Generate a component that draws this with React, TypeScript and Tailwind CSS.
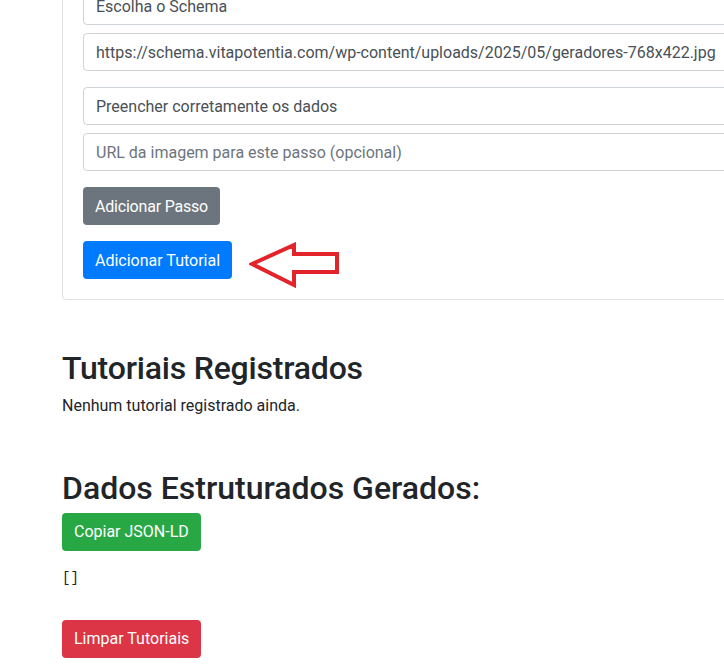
const inputCls =
  'block w-full h-[38px] px-3 pt-px border border-[#ced4da] rounded-[4px] bg-white text-[16px] leading-6 text-[#495057] placeholder:text-[#6c757d] outline-none'

const btnCls = 'h-[38px] px-3 pt-px rounded-[4px] text-[16px] leading-6 text-white'

function LeftArrow() {
  return (
    <svg
      className="absolute left-[166px] top-[1px]"
      width="90"
      height="46"
      viewBox="0 0 90 46"
      fill="none"
    >
      <path
        d="M3 22 L45 3 L45 12 L88 12 L88 30 L45 30 L45 43 Z"
        stroke="#e3242b"
        strokeWidth="4"
        strokeLinejoin="miter"
      />
    </svg>
  )
}

export default function App() {
  return (
    <div className="w-[724px] h-[672px] overflow-hidden bg-white font-['Roboto',sans-serif] text-[#212529]">
      <div className="w-[800px] pl-[62px]">
        {/* Tutorial form card */}
        <div className="-mt-[34px] border border-[#dfdfdf] rounded-[4px] p-5">
          <input className={inputCls} defaultValue="Escolha o Schema" />
          <input
            className={`${inputCls} mt-2`}
            defaultValue="https://schema.vitapotentia.com/wp-content/uploads/2025/05/geradores-768x422.jpg"
          />
          <input className={`${inputCls} mt-4`} defaultValue="Preencher corretamente os dados" />
          <input className={`${inputCls} mt-2`} placeholder="URL da imagem para este passo (opcional)" />

          <button className={`${btnCls} mt-4 block bg-[#6c757d] tracking-[-0.2px]`}>Adicionar Passo</button>
          <div className="relative mt-4">
            <button className={`${btnCls} block bg-[#007bff]`}>Adicionar Tutorial</button>
            <LeftArrow />
          </div>
        </div>

        {/* Registered tutorials */}
        <h2 className="mt-[49px] mb-[7px] text-[32px] leading-[1.2] font-medium tracking-[-0.2px]">
          Tutoriais Registrados
        </h2>
        <p className="text-[16px] leading-6">Nenhum tutorial registrado ainda.</p>

        {/* Generated structured data */}
        <h2 className="mt-[51px] text-[32px] leading-[1.2] font-medium">Dados Estruturados Gerados:</h2>
        <button className={`${btnCls} mt-[5px] block bg-[#28a745]`}>Copiar JSON-LD</button>
        <pre className="mt-[17px] font-['Liberation_Mono',monospace] text-[14px] leading-[21px]">[]</pre>
        <button className={`${btnCls} mt-[31px] block bg-[#dc3545]`}>Limpar Tutoriais</button>
      </div>
    </div>
  )
}
